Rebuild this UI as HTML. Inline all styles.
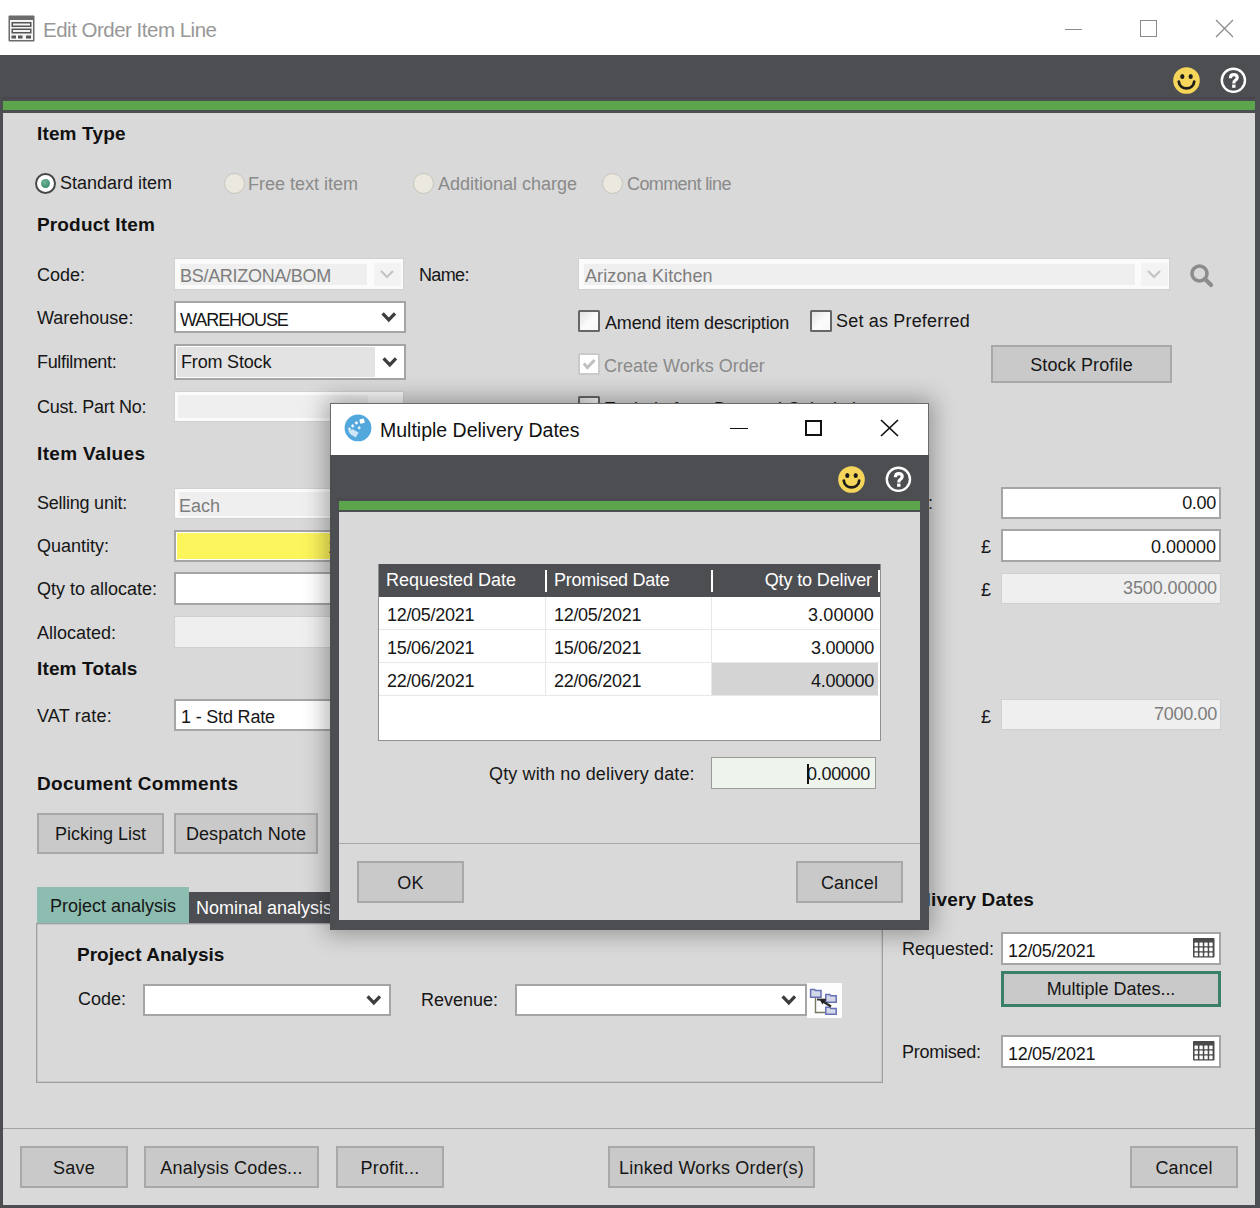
<!DOCTYPE html>
<html><head><meta charset="utf-8">
<style>
*{box-sizing:border-box}
html,body{margin:0;padding:0}
body{width:1260px;height:1208px;overflow:hidden;position:relative;background:#fff;font-family:"Liberation Sans",sans-serif;color:#111}
.a{position:absolute}
.t{position:absolute;white-space:nowrap;line-height:20px;font-size:18px;color:#161616;letter-spacing:0}
.b{font-weight:bold;font-size:19px;color:#111;letter-spacing:0.15px}
.g{color:#8a8a8a}
.fld{position:absolute;background:#fff;border:2px solid #a5a5a5}
.n{letter-spacing:-0.3px}
.dis{position:absolute;background:#efefef;border:5px solid #fbfbfb;border-width:6px 6px 4px 6px}
.btn{position:absolute;background:#c9c9c9;border:2px solid #a8a8a8;text-align:center;line-height:20px;font-size:18px;color:#161616;white-space:nowrap;letter-spacing:0.2px}
.chev{position:absolute;width:16px;height:10px}
.cb{position:absolute;width:22px;height:22px;border:2px solid #666;border-radius:1.5px;background:linear-gradient(135deg,#e2e2e2,#fbfbfb 55%,#f6f6f6)}
.rad{position:absolute;width:21px;height:21px;border-radius:50%;background:#ebe9df;border:1px solid #c6c4ba}
</style></head><body>

<!-- ===== title bar ===== -->
<svg class="a" style="left:8px;top:15px" width="27" height="27" viewBox="0 0 27 27">
 <rect x="0.5" y="0.5" width="26" height="26" rx="1" fill="#6b6b6b"/>
 <rect x="2" y="5" width="23" height="20" fill="#f4f4f4"/>
 <rect x="3.5" y="7" width="20" height="5" fill="#555"/><rect x="5" y="8.5" width="17" height="2" fill="#f4f4f4"/>
 <rect x="3.5" y="13.5" width="20" height="5" fill="#555"/><rect x="5" y="15" width="17" height="2" fill="#f4f4f4"/>
 <rect x="3.5" y="20.5" width="4.5" height="3" fill="#555"/><rect x="10" y="20.5" width="4.5" height="3" fill="#555"/><rect x="18" y="20.5" width="5" height="3" fill="#555"/>
</svg>
<div class="t" style="left:43px;top:20px;font-size:20.5px;line-height:20px;letter-spacing:-0.5px;color:#979797">Edit Order Item Line</div>
<div class="a" style="left:1065px;top:29px;width:17px;height:1px;background:#8a8a8a"></div>
<div class="a" style="left:1140px;top:20px;width:17px;height:17px;border:1px solid #8a8a8a"></div>
<svg class="a" style="left:1215px;top:19px" width="19" height="19" viewBox="0 0 19 19"><path d="M1 1L18 18M18 1L1 18" stroke="#8a8a8a" stroke-width="1.2"/></svg>

<!-- ===== frame ===== -->
<div class="a" style="left:0;top:55px;width:1260px;height:1153px;background:#4d4e52"></div>
<div class="a" style="left:2px;top:97px;width:1253px;height:2px;background:#49474d"></div>
<div class="a" style="left:3px;top:101px;width:1252px;height:9px;background:#5da54d"></div>
<div class="a" style="left:3px;top:113px;width:1252px;height:1092px;background:#d9d9d9"></div>
<!-- smiley / help -->
<svg class="a" style="left:1173px;top:67px" width="27" height="27" viewBox="0 0 27 27">
 <circle cx="13.5" cy="13.5" r="13.3" fill="#f6d65a"/>
 <ellipse cx="9.3" cy="9.6" rx="2.1" ry="2.5" fill="#1c1c1c"/><ellipse cx="17.7" cy="9.6" rx="2.1" ry="2.5" fill="#1c1c1c"/>
 <path d="M5.8 14.6 C6.6 23.6 20.4 23.6 21.2 14.6" stroke="#1c1c1c" stroke-width="2.8" fill="none" stroke-linecap="round"/>
</svg>
<svg class="a" style="left:1220px;top:67px" width="27" height="27" viewBox="0 0 27 27">
 <circle cx="13.4" cy="13.3" r="11.6" fill="none" stroke="#fff" stroke-width="2.4"/>
 <path d="M10.4 11.2 Q10.4 7.6 13.8 7.6 Q17.2 7.6 17.2 10.6 Q17.2 12.4 15.3 13.4 Q13.8 14.2 13.8 16.4" stroke="#fff" stroke-width="3.2" fill="none"/>
 <rect x="12.1" y="17.6" width="3.4" height="3.2" fill="#fff"/>
</svg>

<!-- ===== Item type ===== -->
<div class="t b" style="left:37px;top:124px">Item Type</div>
<div class="rad" style="left:35px;top:173px;background:#fff;border:2px solid #474747"></div>
<div class="a" style="left:41px;top:179px;width:9px;height:9px;border-radius:50%;background:radial-gradient(circle at 40% 35%,#6fb69a,#2e7a5e)"></div>
<div class="t" style="left:60px;top:173px">Standard item</div>
<div class="rad" style="left:224px;top:173px"></div>
<div class="t g" style="left:248px;top:174px">Free text item</div>
<div class="rad" style="left:413px;top:173px"></div>
<div class="t g" style="left:438px;top:174px">Additional charge</div>
<div class="rad" style="left:602px;top:173px"></div>
<div class="t g" style="left:627px;top:174px;letter-spacing:-0.60px">Comment line</div>

<div class="t b" style="left:37px;top:215px">Product Item</div>

<!-- labels -->
<div class="t" style="left:37px;top:265px">Code:</div>
<div class="t" style="left:37px;top:308px">Warehouse:</div>
<div class="t" style="left:37px;top:352px;letter-spacing:-0.33px">Fulfilment:</div>
<div class="t" style="left:37px;top:397px;letter-spacing:-0.28px">Cust. Part No:</div>

<!-- code combo disabled -->
<div class="a" style="left:174px;top:258px;width:230px;height:32px;background:#fbfbfb;border:1px solid #d0d0d0"></div>
<div class="a" style="left:180px;top:264px;width:187px;height:21px;background:#efefef"></div>
<div class="a" style="left:374px;top:263px;width:27px;height:23px;background:#f3f3f3"></div>
<div class="t g" style="left:180px;top:266px;color:#7d7d7d;letter-spacing:-0.29px">BS/ARIZONA/BOM</div>
<svg class="chev" style="left:379px;top:269px" viewBox="0 0 16 10"><path d="M2 2L8 8L14 2" stroke="#c4c4c4" stroke-width="2.2" fill="none"/></svg>

<!-- warehouse -->
<div class="fld" style="left:174px;top:301px;width:232px;height:32px"></div>
<div class="t" style="left:180px;top:310px;letter-spacing:-1.06px">WAREHOUSE</div>
<svg class="chev" style="left:381px;top:312px;overflow:visible" viewBox="0 0 16 10"><path d="M1.6 1.4L7.8 7.8L14 1.4" stroke="#3d3d3f" stroke-width="3.3" fill="none"/></svg>

<!-- fulfilment -->
<div class="fld" style="left:174px;top:344px;width:232px;height:36px"></div>
<div class="a" style="left:177px;top:347px;width:198px;height:30px;background:#e3e3e3"></div>
<div class="t" style="left:181px;top:352px;letter-spacing:-0.18px">From Stock</div>
<svg class="chev" style="left:382px;top:357px;overflow:visible" viewBox="0 0 16 10"><path d="M1.6 1.4L7.8 7.8L14 1.4" stroke="#3d3d3f" stroke-width="3.3" fill="none"/></svg>

<!-- cust part disabled -->
<div class="a" style="left:174px;top:391px;width:230px;height:31px;background:#fbfbfb;border:1px solid #d0d0d0"></div>
<div class="a" style="left:178px;top:395px;width:190px;height:23px;background:#efefef"></div>

<!-- name -->
<div class="t" style="left:419px;top:265px;letter-spacing:-0.65px">Name:</div>
<div class="a" style="left:578px;top:258px;width:592px;height:32px;background:#fbfbfb;border:1px solid #d0d0d0"></div>
<div class="a" style="left:584px;top:264px;width:551px;height:21px;background:#efefef"></div>
<div class="a" style="left:1141px;top:263px;width:27px;height:23px;background:#f3f3f3"></div>
<div class="t" style="left:585px;top:266px;color:#7d7d7d;letter-spacing:0.11px">Arizona Kitchen</div>
<svg class="chev" style="left:1146px;top:269px" viewBox="0 0 16 10"><path d="M2 2L8 8L14 2" stroke="#c4c4c4" stroke-width="2.2" fill="none"/></svg>
<svg class="a" style="left:1189px;top:263px" width="26" height="26" viewBox="0 0 26 26">
 <circle cx="10.5" cy="10.5" r="7.5" fill="none" stroke="#8c8c8c" stroke-width="3.6"/>
 <path d="M16 16L22 22" stroke="#8c8c8c" stroke-width="4.2" stroke-linecap="round"/>
</svg>

<!-- checkboxes -->
<div class="cb" style="left:578px;top:310px"></div>
<div class="t" style="left:605px;top:313px;letter-spacing:-0.18px">Amend item description</div>
<div class="cb" style="left:810px;top:310px"></div>
<div class="t" style="left:836px;top:311px;letter-spacing:0.18px">Set as Preferred</div>
<div class="cb" style="left:578px;top:353px;border:2px solid #cacaca;background:#fff"></div>
<svg class="a" style="left:582px;top:357px" width="14" height="14" viewBox="0 0 14 14"><path d="M1.8 6.6L5.4 10.6L12.6 3" stroke="#c0c0c0" stroke-width="3" fill="none"/></svg>
<div class="t g" style="left:604px;top:356px">Create Works Order</div>
<div class="cb" style="left:578px;top:396px"></div>
<div class="t" style="left:604px;top:399px">Exclude from Demand Calculation</div>
<div class="btn" style="left:991px;top:345px;width:181px;height:38px;padding-top:8px;letter-spacing:0.12px">Stock Profile</div>

<!-- item values -->
<div class="t b" style="left:37px;top:444px;letter-spacing:0.35px">Item Values</div>
<div class="t" style="left:37px;top:493px;letter-spacing:-0.24px">Selling unit:</div>
<div class="t" style="left:37px;top:536px">Quantity:</div>
<div class="t" style="left:37px;top:579px">Qty to allocate:</div>
<div class="t" style="left:37px;top:623px">Allocated:</div>
<div class="t b" style="left:37px;top:659px">Item Totals</div>
<div class="t" style="left:37px;top:706px;letter-spacing:0.20px">VAT rate:</div>

<div class="a" style="left:174px;top:488px;width:231px;height:31px;background:#fbfbfb;border:1px solid #d0d0d0"></div>
<div class="a" style="left:179px;top:492px;width:222px;height:24px;background:#efefef"></div>
<div class="t" style="left:179px;top:496px;color:#7d7d7d">Each</div>
<div class="fld" style="left:174px;top:530px;width:231px;height:32px"></div>
<div class="a" style="left:177px;top:533px;width:225px;height:26px;background:#fdf55c"></div>
<div class="t n" style="left:328px;top:537px;width:70px;text-align:right">10.00000</div>
<div class="fld" style="left:174px;top:572px;width:231px;height:33px"></div>
<div class="a" style="left:174px;top:616px;width:231px;height:32px;background:#efefef;border:1px solid #cfcfcf"></div>
<div class="fld" style="left:174px;top:699px;width:231px;height:32px"></div>
<div class="t" style="left:181px;top:707px;letter-spacing:-0.18px">1 - Std Rate</div>

<!-- right values -->
<div class="t" style="left:858px;top:493px">Discount:</div>
<div class="fld" style="left:1001px;top:487px;width:220px;height:32px"></div>
<div class="t n" style="left:1100px;top:493px;width:116px;text-align:right">0.00</div>
<div class="t" style="left:981px;top:537px">£</div>
<div class="fld" style="left:1001px;top:529px;width:220px;height:33px"></div>
<div class="t n" style="left:1060px;top:537px;width:156px;text-align:right;letter-spacing:-0.02px">0.00000</div>
<div class="t" style="left:981px;top:580px">£</div>
<div class="a" style="left:1001px;top:573px;width:220px;height:31px;background:#efefef;border:1px solid #cfcfcf"></div>
<div class="t n" style="left:1060px;top:578px;width:157px;text-align:right;color:#7d7d7d;letter-spacing:-0.11px">3500.00000</div>
<div class="t" style="left:981px;top:707px">£</div>
<div class="a" style="left:1001px;top:699px;width:220px;height:31px;background:#efefef;border:1px solid #cfcfcf"></div>
<div class="t n" style="left:1060px;top:704px;width:157px;text-align:right;color:#7d7d7d">7000.00</div>

<!-- document comments -->
<div class="t b" style="left:37px;top:774px;letter-spacing:0.29px">Document Comments</div>
<div class="btn" style="left:37px;top:813px;width:127px;height:41px;padding-top:9px;letter-spacing:-0.01px">Picking List</div>
<div class="btn" style="left:174px;top:813px;width:144px;height:41px;padding-top:9px;letter-spacing:0.09px">Despatch Note</div>

<!-- tabs -->
<div class="a" style="left:36px;top:923px;width:847px;height:160px;border:1px solid #a0a0a0;box-shadow:inset 0 0 0 0.5px #b4b4b4"></div>
<div class="a" style="left:37px;top:887px;width:152px;height:36px;background:#8dbcb0"></div>
<div class="t" style="left:50px;top:896px">Project analysis</div>
<div class="a" style="left:189px;top:892px;width:160px;height:31px;background:#4d4e52"></div>
<div class="t" style="left:196px;top:898px;color:#fff">Nominal analysis</div>
<div class="t b" style="left:77px;top:945px;letter-spacing:0.02px">Project Analysis</div>
<div class="t" style="left:78px;top:989px">Code:</div>
<div class="fld" style="left:143px;top:984px;width:248px;height:32px"></div>
<svg class="chev" style="left:366px;top:995px;overflow:visible" viewBox="0 0 16 10"><path d="M1.6 1.4L7.8 7.8L14 1.4" stroke="#3d3d3f" stroke-width="3.3" fill="none"/></svg>
<div class="t" style="left:421px;top:990px">Revenue:</div>
<div class="fld" style="left:515px;top:984px;width:292px;height:32px"></div>
<svg class="chev" style="left:781px;top:995px;overflow:visible" viewBox="0 0 16 10"><path d="M1.6 1.4L7.8 7.8L14 1.4" stroke="#3d3d3f" stroke-width="3.3" fill="none"/></svg>
<div class="a" style="left:807px;top:983px;width:35px;height:35px;background:#fdfdfd"></div>
<svg class="a" style="left:807px;top:983px" width="35" height="35" viewBox="0 0 35 35">
 <path d="M8.5 14.8V29.5H18.2" stroke="#7a7a60" stroke-width="1.4" fill="none"/>
 <g fill="#d3d8e8" stroke="#6670b4" stroke-width="1.5">
  <path d="M3.6 6.4H7.5L8.5 7.6H14V14.2H3.6Z"/>
  <path d="M18.8 11.6H22.7L23.7 12.8H29.2V19.2H18.8Z"/>
  <path d="M18.8 24.2H22.7L23.7 25.4H29.2V31.2H18.8Z"/>
 </g>
 <path d="M10 16.6L19 16.8" stroke="#333" stroke-width="2" fill="none"/>
 <path d="M24 23.5L14.5 17.5" stroke="#2a2a2a" stroke-width="2.2" fill="none"/>
 <path d="M12.6 16.2L18.5 16.4L15.4 21.6Z" fill="#222"/>
</svg>

<!-- delivery dates -->
<div class="t b" style="left:901px;top:890px">Delivery Dates</div>
<div class="t" style="left:902px;top:939px">Requested:</div>
<div class="fld" style="left:1001px;top:932px;width:220px;height:33px"></div>
<div class="t n" style="left:1008px;top:941px">12/05/2021</div>
<svg class="a" style="left:1193px;top:938px" width="22" height="20" viewBox="0 0 22 20"><rect x="0" y="0" width="21.5" height="19.6" rx="0.8" fill="#4a4a4a"/><g fill="#fff"><rect x="1.5" y="4.6" width="3.4" height="3.6" rx="0.5"/><rect x="6.4" y="4.6" width="3.4" height="3.6" rx="0.5"/><rect x="11.3" y="4.6" width="3.4" height="3.6" rx="0.5"/><rect x="16.2" y="4.6" width="3.4" height="3.6" rx="0.5"/><rect x="1.5" y="9.6" width="3.4" height="3.6" rx="0.5"/><rect x="6.4" y="9.6" width="3.4" height="3.6" rx="0.5"/><rect x="11.3" y="9.6" width="3.4" height="3.6" rx="0.5"/><rect x="16.2" y="9.6" width="3.4" height="3.6" rx="0.5"/><rect x="1.5" y="14.6" width="3.4" height="3.6" rx="0.5"/><rect x="6.4" y="14.6" width="3.4" height="3.6" rx="0.5"/><rect x="11.3" y="14.6" width="3.4" height="3.6" rx="0.5"/><rect x="16.2" y="14.6" width="3.4" height="3.6" rx="0.5"/></g></svg>
<div class="btn" style="left:1001px;top:971px;width:220px;height:36px;border:3.5px solid #3a7f67;padding-top:5px;letter-spacing:-0.02px">Multiple Dates...</div>
<div class="t" style="left:902px;top:1042px;letter-spacing:-0.26px">Promised:</div>
<div class="fld" style="left:1001px;top:1035px;width:220px;height:33px"></div>
<div class="t n" style="left:1008px;top:1044px">12/05/2021</div>
<svg class="a" style="left:1193px;top:1041px" width="22" height="20" viewBox="0 0 22 20"><rect x="0" y="0" width="21.5" height="19.6" rx="0.8" fill="#4a4a4a"/><g fill="#fff"><rect x="1.5" y="4.6" width="3.4" height="3.6" rx="0.5"/><rect x="6.4" y="4.6" width="3.4" height="3.6" rx="0.5"/><rect x="11.3" y="4.6" width="3.4" height="3.6" rx="0.5"/><rect x="16.2" y="4.6" width="3.4" height="3.6" rx="0.5"/><rect x="1.5" y="9.6" width="3.4" height="3.6" rx="0.5"/><rect x="6.4" y="9.6" width="3.4" height="3.6" rx="0.5"/><rect x="11.3" y="9.6" width="3.4" height="3.6" rx="0.5"/><rect x="16.2" y="9.6" width="3.4" height="3.6" rx="0.5"/><rect x="1.5" y="14.6" width="3.4" height="3.6" rx="0.5"/><rect x="6.4" y="14.6" width="3.4" height="3.6" rx="0.5"/><rect x="11.3" y="14.6" width="3.4" height="3.6" rx="0.5"/><rect x="16.2" y="14.6" width="3.4" height="3.6" rx="0.5"/></g></svg>

<!-- bottom bar -->
<div class="a" style="left:3px;top:1128px;width:1252px;height:1px;background:#a3a3a3"></div>
<div class="btn" style="left:20px;top:1146px;width:108px;height:42px;padding-top:10px">Save</div>
<div class="btn" style="left:144px;top:1146px;width:175px;height:42px;padding-top:10px">Analysis Codes...</div>
<div class="btn" style="left:336px;top:1146px;width:108px;height:42px;padding-top:10px">Profit...</div>
<div class="btn" style="left:608px;top:1146px;width:207px;height:42px;padding-top:10px">Linked Works Order(s)</div>
<div class="btn" style="left:1130px;top:1146px;width:108px;height:42px;padding-top:10px">Cancel</div>

<!-- ===== modal ===== -->
<div class="a" style="left:330px;top:403px;width:599px;height:527px;background:#4d4e52;box-shadow:0 0 22px 4px rgba(0,0,0,0.32)"></div>
<div class="a" style="left:330px;top:403px;width:599px;height:52px;background:#fff;border:1px solid #6a6a6a;border-bottom:none"></div>
<svg class="a" style="left:344px;top:414px" width="28" height="28" viewBox="0 0 28 28">
 <circle cx="14" cy="13.9" r="13.4" fill="#52a7dd"/>
 <g fill="#fff">
  <rect x="15.8" y="5" width="4.6" height="4.4" rx="0.5" transform="rotate(-15 18.1 7.2)"/>
  <rect x="11.1" y="7.6" width="2.6" height="2.6" transform="rotate(45 12.4 8.9)"/>
  <rect x="7.4" y="10.6" width="2.6" height="2.6" transform="rotate(45 8.7 11.9)" opacity="0.9"/>
  <rect x="14" y="12.4" width="2.5" height="2.5" transform="rotate(45 15.2 13.6)" opacity="0.85"/>
  <rect x="4.3" y="13.8" width="2.5" height="2.5" transform="rotate(45 5.5 15)" opacity="0.85"/>
  <polygon points="4.2,17 8.6,15.2 14.6,18.4 11.8,23.4 6.8,20.4" opacity="0.72"/>
 </g>
</svg>
<div class="t" style="left:380px;top:420px;font-size:19.5px;letter-spacing:0;color:#111">Multiple Delivery Dates</div>
<div class="a" style="left:730px;top:428px;width:18px;height:1px;background:#111"></div>
<div class="a" style="left:805px;top:420px;width:17px;height:16px;border:2px solid #111"></div>
<svg class="a" style="left:880px;top:419px" width="19" height="18" viewBox="0 0 19 18"><path d="M1 1L18 17M18 1L1 17" stroke="#111" stroke-width="1.7"/></svg>
<svg class="a" style="left:838px;top:466px" width="27" height="27" viewBox="0 0 27 27">
 <circle cx="13.5" cy="13.5" r="13.3" fill="#f6d65a"/>
 <ellipse cx="9.3" cy="9.6" rx="2.1" ry="2.5" fill="#1c1c1c"/><ellipse cx="17.7" cy="9.6" rx="2.1" ry="2.5" fill="#1c1c1c"/>
 <path d="M5.8 14.6 C6.6 23.6 20.4 23.6 21.2 14.6" stroke="#1c1c1c" stroke-width="2.8" fill="none" stroke-linecap="round"/>
</svg>
<svg class="a" style="left:885px;top:466px" width="27" height="27" viewBox="0 0 27 27">
 <circle cx="13.4" cy="13.3" r="11.6" fill="none" stroke="#fff" stroke-width="2.4"/>
 <path d="M10.4 11.2 Q10.4 7.6 13.8 7.6 Q17.2 7.6 17.2 10.6 Q17.2 12.4 15.3 13.4 Q13.8 14.2 13.8 16.4" stroke="#fff" stroke-width="3.2" fill="none"/>
 <rect x="12.1" y="17.6" width="3.4" height="3.2" fill="#fff"/>
</svg>
<div class="a" style="left:336px;top:498px;width:560px;height:2px;background:#4b4850"></div>
<div class="a" style="left:339px;top:501px;width:581px;height:9px;background:#5da54d"></div>
<div class="a" style="left:339px;top:512px;width:581px;height:408px;background:#d9d9d9"></div>

<!-- grid -->
<div class="a" style="left:378px;top:564px;width:503px;height:177px;background:#fff;border:1px solid #8f8f8f"></div>
<div class="a" style="left:379px;top:564px;width:501px;height:33px;background:#4d4e52"></div>
<div class="a" style="left:545px;top:570px;width:2px;height:22px;background:#fff"></div>
<div class="a" style="left:711px;top:570px;width:2px;height:22px;background:#fff"></div>
<div class="a" style="left:878px;top:570px;width:2px;height:22px;background:#fff"></div>
<div class="t" style="left:386px;top:570px;color:#fff">Requested Date</div>
<div class="t" style="left:554px;top:570px;color:#fff;letter-spacing:-0.27px">Promised Date</div>
<div class="t" style="left:700px;top:570px;width:172px;text-align:right;color:#fff;letter-spacing:-0.12px">Qty to Deliver</div>
<div class="a" style="left:379px;top:629px;width:500px;height:1px;background:#e8e8e8"></div>
<div class="a" style="left:379px;top:662px;width:500px;height:1px;background:#e8e8e8"></div>
<div class="a" style="left:379px;top:695px;width:500px;height:1px;background:#e8e8e8"></div>
<div class="a" style="left:545px;top:597px;width:1px;height:98px;background:#e8e8e8"></div>
<div class="a" style="left:711px;top:597px;width:1px;height:98px;background:#e8e8e8"></div>
<div class="a" style="left:712px;top:663px;width:166px;height:32px;background:#d4d4d4"></div>
<div class="t n" style="left:387px;top:605px">12/05/2021</div>
<div class="t n" style="left:554px;top:605px">12/05/2021</div>
<div class="t n" style="left:700px;top:605px;width:174px;text-align:right;letter-spacing:0.12px">3.00000</div>
<div class="t n" style="left:387px;top:638px">15/06/2021</div>
<div class="t n" style="left:554px;top:638px">15/06/2021</div>
<div class="t n" style="left:700px;top:638px;width:174px;text-align:right">3.00000</div>
<div class="t n" style="left:387px;top:671px">22/06/2021</div>
<div class="t n" style="left:554px;top:671px">22/06/2021</div>
<div class="t n" style="left:700px;top:671px;width:174px;text-align:right">4.00000</div>

<div class="t" style="left:489px;top:764px;letter-spacing:0.14px">Qty with no delivery date:</div>
<div class="a" style="left:711px;top:757px;width:165px;height:32px;background:#eef3ec;border:1px solid #9a9a9a"></div>
<div class="t n" style="left:760px;top:764px;width:110px;text-align:right">0.00000</div>
<div class="a" style="left:807px;top:764px;width:1.5px;height:20px;background:#111"></div>

<div class="a" style="left:339px;top:843px;width:581px;height:1px;background:#a8a8a8"></div>
<div class="btn" style="left:357px;top:861px;width:107px;height:42px;padding-top:10px">OK</div>
<div class="btn" style="left:796px;top:861px;width:107px;height:42px;padding-top:10px">Cancel</div>

</body></html>
